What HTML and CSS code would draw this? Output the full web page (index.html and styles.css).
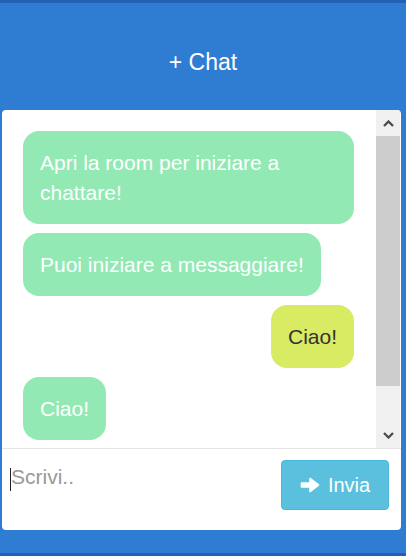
FILE: index.html
```html
<!DOCTYPE html>
<html lang="it">
<head>
<meta charset="utf-8">
<title>Chat</title>
<link rel="stylesheet" href="styles.css">
</head>
<body>
<div class="app">
  <div class="edge"></div>
  <header class="header"><h1 class="title">+ Chat</h1></header>
  <section class="card">
    <div class="chat">
      <div class="messages">
        <div class="msg">Apri la room per iniziare a chattare!</div>
        <div class="msg">Puoi iniziare a messaggiare!</div>
        <div class="msg msg-out">Ciao!</div>
        <div class="msg">Ciao!</div>
      </div>
      <div class="scrollbar">
        <div class="sb-btn"><svg width="11" height="7" viewBox="0 0 11 7"><path d="M1 6 L5.5 1.5 L10 6" fill="none" stroke="#4a4a4a" stroke-width="2.3"/></svg></div>
        <div class="sb-track"><div class="sb-thumb"></div></div>
        <div class="sb-btn"><svg width="11" height="7" viewBox="0 0 11 7"><path d="M1 1 L5.5 5.5 L10 1" fill="none" stroke="#4a4a4a" stroke-width="2.3"/></svg></div>
      </div>
    </div>
    <form class="composer">
      <textarea class="input" placeholder="Scrivi.."></textarea>
      <button class="send" type="button"><svg class="arrow" width="20" height="16" viewBox="0 0 20 16"><path d="M1.5 6 H10 V1.5 L18.5 8 L10 14.5 V10 H1.5 Z" fill="#fff" stroke="#fff" stroke-width="1.6" stroke-linejoin="round"/></svg><span>Invia</span></button>
    </form>
  </section>
  <div class="spacer"></div>
  <div class="edge"></div>
</div>
</body>
</html>
```
FILE: styles.css
```css
html, body {
  margin: 0;
  height: 100%;
}
body {
  background: #2f7cd3;
  font-family: "Liberation Sans", Arial, sans-serif;
}
.app {
  height: 556px;
  display: flex;
  flex-direction: column;
}
.edge {
  height: 3px;
  background: #2160b3;
}
.header {
  height: 107px;
  box-sizing: border-box;
  padding-top: 45px;
  display: flex;
  justify-content: center;
}
.title {
  margin: 0;
  font-size: 23px;
  font-weight: normal;
  line-height: 28px;
  color: #fff;
}
.card {
  margin: 0 5px 0 2px;
  height: 420px;
  background: #fff;
  border-radius: 4px;
  display: flex;
  flex-direction: column;
  overflow: hidden;
}
.chat {
  height: 338px;
  display: flex;
  border-bottom: 1px solid #e6e6e6;
}
.messages {
  flex: 1;
  padding: 21px 22px 0 21px;
  display: flex;
  flex-direction: column;
  align-items: flex-start;
  gap: 9px;
  overflow: hidden;
}
.msg {
  max-width: 100%;
  box-sizing: border-box;
  padding: 16.5px 17px;
  font-size: 21px;
  line-height: 30px;
  border-radius: 16px;
  background: #93e9b4;
  color: #fff;
}
.msg-out {
  align-self: flex-end;
  background: #d9ea63;
  color: #333;
}
.scrollbar {
  width: 24px;
  margin-right: 1px;
  background: #f0f0f0;
  display: flex;
  flex-direction: column;
}
.sb-btn {
  height: 26px;
  display: flex;
  align-items: center;
  justify-content: center;
}
.sb-track {
  flex: 1;
}
.sb-thumb {
  height: 250px;
  background: #cdcdcd;
}
.composer {
  margin: 0;
  height: 81px;
  box-sizing: border-box;
  padding: 11px 12px 0 8px;
  display: flex;
  align-items: flex-start;
  gap: 10px;
}
.input {
  flex: 1;
  height: 50px;
  margin: 0;
  padding: 5px 0 0 1px;
  border: 0;
  outline: 0;
  resize: none;
  font-family: "Liberation Sans", Arial, sans-serif;
  font-size: 21px;
  line-height: 24px;
  color: #555;
  background: linear-gradient(#222, #222) no-repeat 0 8px / 1px 23px;
}
.input::placeholder {
  color: #999;
}
.send {
  width: 108px;
  height: 50px;
  padding: 0;
  background: #5bc0de;
  border: 1px solid #46b8da;
  border-radius: 4px;
  color: #fff;
  font-family: "Liberation Sans", Arial, sans-serif;
  font-size: 20px;
  display: flex;
  align-items: center;
  justify-content: center;
  gap: 8px;
}
.arrow {
  display: block;
}
.spacer {
  flex: 1;
}
```
